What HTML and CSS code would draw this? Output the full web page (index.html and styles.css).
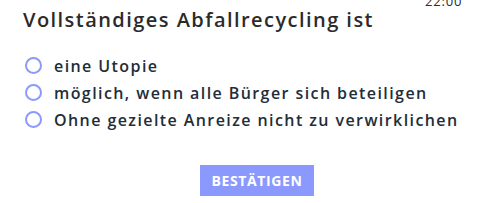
FILE: index.html
```html
<!DOCTYPE html>
<html lang="de">
<head>
<meta charset="utf-8">
<link rel="stylesheet" href="styles.css">
</head>
<body>
<div class="clock">22:00</div>
<main class="quiz">
  <h1 class="question">Vollständiges Abfallrecycling ist</h1>
  <ul class="options">
    <li class="option"><span class="radio"></span><span class="label">eine Utopie</span></li>
    <li class="option"><span class="radio"></span><span class="label">möglich, wenn alle Bürger sich beteiligen</span></li>
    <li class="option"><span class="radio"></span><span class="label">Ohne gezielte Anreize nicht zu verwirklichen</span></li>
  </ul>
  <div class="actions"><button class="confirm">BESTÄTIGEN</button></div>
</main>
</body>
</html>
```
FILE: styles.css
```css
html, body {
  margin: 0;
  padding: 0;
  background: #ffffff;
  width: 478px;
  height: 203px;
  overflow: hidden;
  font-family: "Open Sans", "Noto Sans", sans-serif;
  color: #222d38;
}
.clock {
  position: absolute;
  top: -8px;
  left: 425px;
  font-size: 13px;
  color: #222d38;
  letter-spacing: 0.8px;
}
.quiz {
  padding: 8px 0 0 23px;
}
.question {
  margin: 0;
  font-size: 20px;
  font-weight: 600;
  line-height: 24px;
  color: #2b2b2b;
  letter-spacing: 1.45px;
}
.options {
  list-style: none;
  margin: 20px 0 0 0;
  padding: 0;
}
.option {
  display: flex;
  align-items: center;
  height: 27px;
}
.radio {
  box-sizing: border-box;
  width: 17px;
  height: 17px;
  border: 2px solid #8b99ff;
  border-radius: 50%;
  margin-left: 2px;
  margin-right: 12px;
  flex: none;
}
.label {
  font-size: 16px;
  font-weight: 600;
  letter-spacing: 1.42px;
}
.actions {
  display: flex;
  padding-left: 177px;
  margin-top: 32px;
}
.confirm {
  width: 114px;
  height: 31px;
  border: none;
  background: #8b99ff;
  color: #ffffff;
  font-family: "Open Sans", sans-serif;
  font-size: 14px;
  font-weight: 700;
  letter-spacing: 0.6px;
  padding: 0;
}
```
